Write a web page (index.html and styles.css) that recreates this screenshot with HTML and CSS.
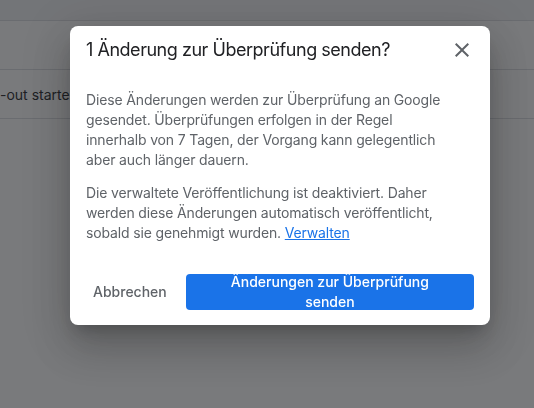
FILE: index.html
```html
<!DOCTYPE html>
<html lang="de">
<head>
<meta charset="utf-8">
<title>Änderung senden</title>
<link rel="stylesheet" href="styles.css">
</head>
<body>
<div class="page">
  <div class="topbar"></div>
  <div class="row"></div>
  <div class="row"><span class="row-text">-out starter</span></div>
</div>
<div class="scrim">
  <div class="dialog" role="dialog">
    <div class="dialog-header">
      <h2 class="dialog-title">1 Änderung zur Überprüfung senden?</h2>
      <button class="close-btn" aria-label="Schließen">
        <svg viewBox="0 0 24 24" width="24" height="24"><path d="M19 6.41 17.59 5 12 10.59 6.41 5 5 6.41 10.59 12 5 17.59 6.41 19 12 13.41 17.59 19 19 17.59 13.41 12z" fill="#5f6368"/></svg>
      </button>
    </div>
    <div class="dialog-body">
      <p>Diese Änderungen werden zur Überprüfung an Google gesendet. Überprüfungen erfolgen in der Regel innerhalb von 7 Tagen, der Vorgang kann gelegentlich aber auch länger dauern.</p>
      <p>Die verwaltete Veröffentlichung ist deaktiviert. Daher werden diese Änderungen automatisch veröffentlicht, sobald sie genehmigt wurden. <a href="#" class="link">Verwalten</a></p>
    </div>
    <div class="dialog-footer">
      <button class="btn-text">Abbrechen</button>
      <button class="btn-primary">Änderungen zur Überprüfung senden</button>
    </div>
  </div>
</div>
</body>
</html>
```
FILE: styles.css
```css
html, body {
  margin: 0;
  padding: 0;
}
body {
  width: 534px;
  height: 408px;
  overflow: hidden;
  background: #ffffff;
  font-family: Inter, Roboto, "Liberation Sans", sans-serif;
}
.page {
  display: flex;
  flex-direction: column;
}
.topbar {
  height: 20px;
  background: #f1f3f4;
  border-bottom: 1px solid #dadce0;
}
.row {
  height: 48px;
  border-bottom: 1px solid #dadce0;
  display: flex;
  align-items: center;
  font-size: 14px;
  color: #202124;
}
.scrim {
  position: fixed;
  inset: 0;
  background: rgba(32, 33, 36, 0.6);
  display: flex;
  align-items: flex-start;
  padding: 26px 0 0 70px;
}
.dialog {
  width: 420px;
  background: #ffffff;
  border-radius: 8px;
  box-shadow: 0 24px 38px 3px rgba(0,0,0,.14), 0 9px 46px 8px rgba(0,0,0,.12), 0 11px 15px -7px rgba(0,0,0,.2);
  display: flex;
  flex-direction: column;
}
.dialog-header {
  display: flex;
  align-items: center;
  justify-content: space-between;
  padding: 12px 16px 0 16px;
}
.dialog-title {
  margin: 0;
  font-family: Inter, sans-serif;
  font-weight: 400;
  font-size: 18px;
  line-height: 24px;
  letter-spacing: -0.47px;
  color: #202124;
}
.close-btn {
  width: 24px;
  height: 24px;
  padding: 0;
  border: 0;
  background: none;
  display: flex;
}
.dialog-body {
  padding: 28px 36px 0 16px;
  font-size: 14px;
  line-height: 20px;
  letter-spacing: -0.15px;
  color: #5f6368;
}
.dialog-body p {
  margin: 0 0 13px 0;
}
.dialog-body p:last-child {
  margin-bottom: 0;
}
.link {
  color: #1a73e8;
  text-decoration: underline;
}
.dialog-footer {
  display: flex;
  align-items: center;
  gap: 11px;
  padding: 31px 16px 15px 15px;
}
.btn-text {
  border: 0;
  background: none;
  padding: 8px 8px;
  font-family: Inter, sans-serif;
  font-weight: 500;
  font-size: 14px;
  line-height: 20px;
  color: #5f6368;
}
.btn-primary {
  flex: 1;
  height: 36px;
  border: 0;
  border-radius: 4px;
  background: #1a73e8;
  color: #ffffff;
  font-family: Inter, sans-serif;
  font-weight: 500;
  font-size: 14px;
  line-height: 20px;
  padding: 0 40px;
  display: flex;
  align-items: center;
  justify-content: center;
  text-align: center;
}
```
